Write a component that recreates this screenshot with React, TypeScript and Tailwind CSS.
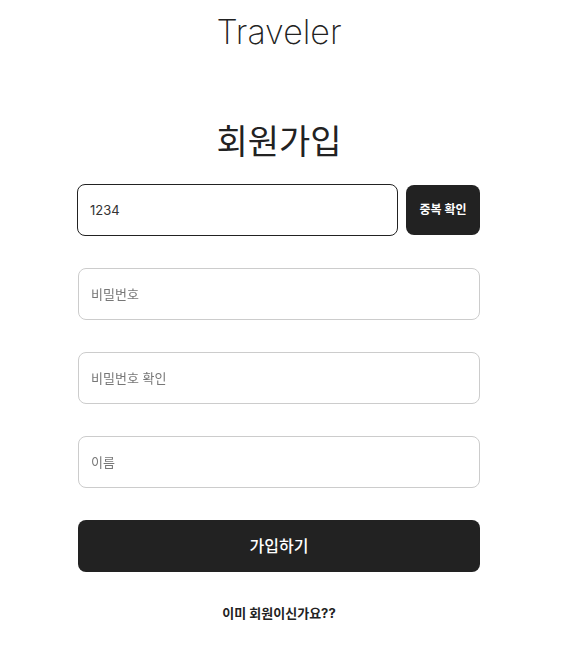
import { useState } from "react";

const font = "font-['Inter','Noto_Sans_CJK_KR',sans-serif]";

export default function App() {
  const [id, setId] = useState("1234");

  return (
    <div className={`min-h-screen bg-white ${font} text-[#222]`}>
      <div className="w-[558px] pt-[12px]">
        {/* Logo */}
        <h1 className="text-center text-[34px] font-extralight leading-[40px] text-[#222]">
          Traveler
        </h1>

        <main className="mx-auto mt-[70px] w-[402px]">
          <h2 className="text-center text-[34px] font-normal leading-[40px] text-[#222]">
            회원가입
          </h2>

          <form className="mt-[22px] flex flex-col gap-[32px]" onSubmit={(e) => e.preventDefault()}>
            {/* 아이디 + 중복 확인 */}
            <div className="flex gap-[8px]">
              <input
                autoFocus
                value={id}
                onChange={(e) => setId(e.target.value)}
                className="h-[52px] w-[321px] -ml-px rounded-[8px] border border-[#222] px-[12px] text-[13px] text-[#333] caret-[#222] outline-none"
              />
              <button
                type="button"
                className="mt-px h-[50px] flex-1 rounded-[8px] bg-[#222] text-[12px] font-semibold text-white"
              >
                중복 확인
              </button>
            </div>

            <input
              type="password"
              placeholder="비밀번호"
              className="h-[52px] w-full rounded-[8px] border border-[#ccc] px-[12px] text-[13px] outline-none placeholder:text-[#777]"
            />
            <input
              type="password"
              placeholder="비밀번호 확인"
              className="h-[52px] w-full rounded-[8px] border border-[#ccc] px-[12px] text-[13px] outline-none placeholder:text-[#777]"
            />
            <input
              placeholder="이름"
              className="h-[52px] w-full rounded-[8px] border border-[#ccc] px-[12px] text-[13px] outline-none placeholder:text-[#777]"
            />

            <button
              type="submit"
              className="h-[52px] w-full rounded-[8px] bg-[#222] text-[16px] font-medium text-white"
            >
              가입하기
            </button>
          </form>

          <p className="mt-[32px] text-center text-[13px] font-bold text-[#222]">
            이미 회원이신가요??
          </p>
        </main>
      </div>
    </div>
  );
}
